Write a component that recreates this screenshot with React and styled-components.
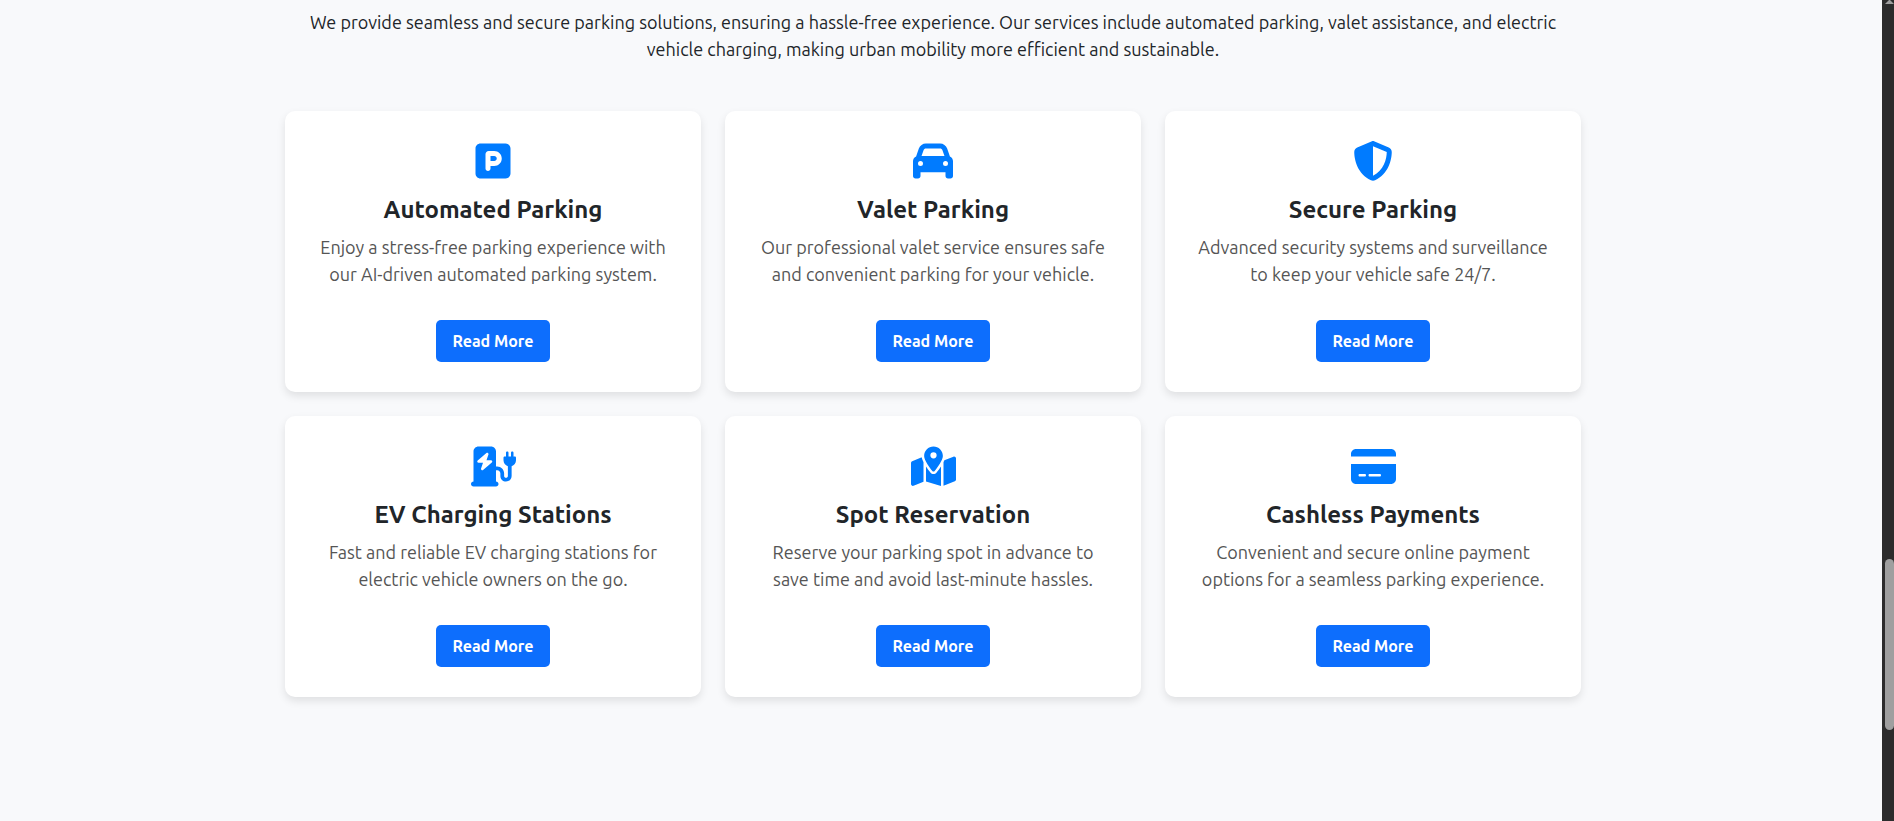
import React from "react";
import styled, { createGlobalStyle } from "styled-components";
import {
  FaSquareParking,
  FaCar,
  FaShieldHalved,
  FaChargingStation,
  FaMapLocationDot,
  FaCreditCard,
} from "react-icons/fa6";

const GlobalStyle = createGlobalStyle`
  *, *::before, *::after { box-sizing: border-box; }
  body {
    margin: 0;
    background: #f8f9fb;
    color: #212529;
    font-family: Ubuntu, "Noto Sans", "Open Sans", sans-serif;
    font-size: 18px;
    line-height: 27px;
  }
`;

const Page = styled.div`
  display: flex;
  min-height: 100vh;
`;

const Services = styled.main`
  flex: 1;
  min-width: 0;
  padding: 9px 16px 100px 0;
`;

const Container = styled.div`
  max-width: 1296px;
  margin: 0 auto;
`;

const Intro = styled.p`
  margin: 0 0 48px;
  padding: 0 16px;
  text-align: center;
`;

const Grid = styled.div`
  display: grid;
  grid-template-columns: repeat(3, minmax(0, 1fr));
  gap: 24px;
`;

const Card = styled.article`
  display: flex;
  flex-direction: column;
  align-items: center;
  padding: 30px;
  border-radius: 10px;
  background: #fff;
  box-shadow: 0 4px 8px rgba(0, 0, 0, 0.1);
  text-align: center;
`;

const CardIcon = styled.div`
  display: flex;
  align-items: center;
  height: 40px;
  margin-bottom: 14px;
  color: #007bff;

  svg {
    flex: none;
    width: ${(p) => (p.$wide ? 45 : 40)}px;
    height: ${(p) => (p.$wide ? 45 : 40)}px;
  }
`;

const CardTitle = styled.h2`
  margin: 0 0 10px;
  font-size: 24px;
  font-weight: 600;
  line-height: 29px;
`;

const CardText = styled.p`
  margin: 0 0 32px;
  color: #555;
`;

const ReadMore = styled.button`
  height: 42px;
  padding: 0 16px;
  border: 0;
  border-radius: 5px;
  background: #0d6efd;
  color: #fff;
  font: inherit;
  font-size: 16px;
  font-weight: 600;
  cursor: pointer;
`;

const ScrollTrack = styled.div`
  position: sticky;
  top: 0;
  display: flex;
  flex-direction: column;
  align-items: flex-end;
  width: 12px;
  height: 100vh;
  background: #2c2c2c;
`;

const ScrollArrow = styled.svg`
  display: block;
  width: 9px;
  height: 4px;
  fill: #9f9f9f;
`;

const ScrollSpace = styled.div`
  flex: ${(p) => p.$share} 1 0;
`;

const ScrollThumb = styled.div`
  flex: 171 1 0;
  width: 9px;
  border-radius: 5px;
  background: #9f9f9f;
`;

const services = [
  { Icon: FaSquareParking, title: "Automated Parking", text: "Enjoy a stress-free parking experience with our AI-driven automated parking system." },
  { Icon: FaCar, title: "Valet Parking", text: "Our professional valet service ensures safe and convenient parking for your vehicle." },
  { Icon: FaShieldHalved, title: "Secure Parking", text: "Advanced security systems and surveillance to keep your vehicle safe 24/7." },
  { Icon: FaChargingStation, wide: true, title: "EV Charging Stations", text: "Fast and reliable EV charging stations for electric vehicle owners on the go." },
  { Icon: FaMapLocationDot, wide: true, title: "Spot Reservation", text: "Reserve your parking spot in advance to save time and avoid last-minute hassles." },
  { Icon: FaCreditCard, wide: true, title: "Cashless Payments", text: "Convenient and secure online payment options for a seamless parking experience." },
];

export default function App() {
  return (
    <>
      <GlobalStyle />
      <Page>
        <Services>
          <Container>
            <Intro>
              We provide seamless and secure parking solutions, ensuring a
              hassle-free experience. Our services include automated parking,
              valet assistance, and electric vehicle charging, making urban
              mobility more efficient and sustainable.
            </Intro>
            <Grid>
              {services.map(({ Icon, wide, title, text }) => (
                <Card key={title}>
                  <CardIcon $wide={wide}><Icon aria-hidden="true" /></CardIcon>
                  <CardTitle>{title}</CardTitle>
                  <CardText>{text}</CardText>
                  <ReadMore type="button">Read More</ReadMore>
                </Card>
              ))}
            </Grid>
          </Container>
        </Services>
        <ScrollTrack aria-hidden="true">
          <ScrollArrow viewBox="0 0 9 4"><path d="M4 0h1l4 4H0z" /></ScrollArrow>
          <ScrollSpace $share={555} />
          <ScrollThumb />
          <ScrollSpace $share={91} />
        </ScrollTrack>
      </Page>
    </>
  );
}
